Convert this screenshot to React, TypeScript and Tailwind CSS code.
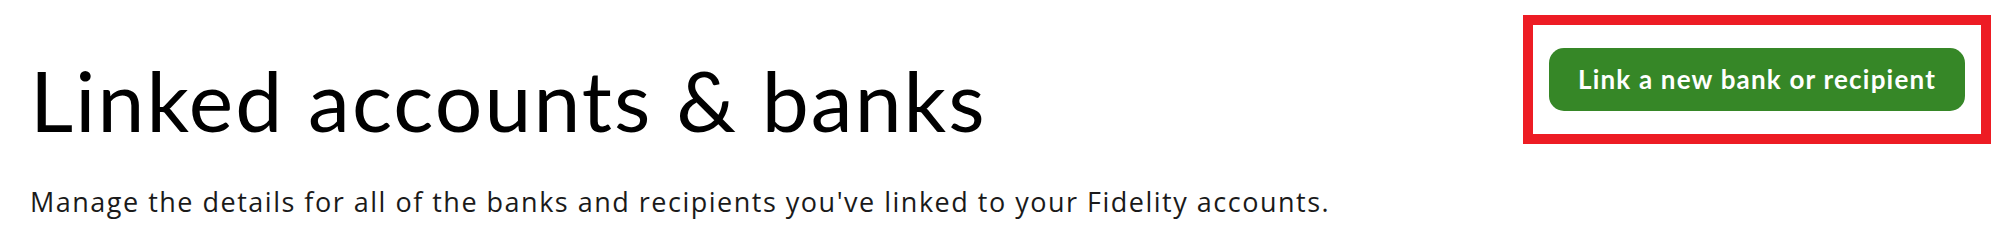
import React from "react";

export default function App() {
  return (
    <div className="w-[2000px] h-[251px] bg-white flex justify-between" style={{ fontFamily: "Lato, 'Noto Sans', sans-serif" }}>
      <div className="pl-[30px] pt-[50px]">
        <h1 className="text-[84px] leading-[100px] font-normal text-black tracking-[2.1px]">Linked accounts &amp; banks</h1>
        <p className="mt-[36px] text-[27px] leading-[32px] text-[#1a1a1a] tracking-[1.5px] font-['Open_Sans',sans-serif]">
          Manage the details for all of the banks and recipients you've linked to your Fidelity accounts.
        </p>
      </div>
      <div className="mt-[15px] mr-[9px] w-[468px] h-[129px] border-[10px] border-[#ed1c24] flex items-center justify-center self-start">
        <button className="w-[416px] h-[63px] rounded-[15px] bg-[#368727] text-white font-bold text-[26px] tracking-[1.2px]">
          Link a new bank or recipient
        </button>
      </div>
    </div>
  );
}
